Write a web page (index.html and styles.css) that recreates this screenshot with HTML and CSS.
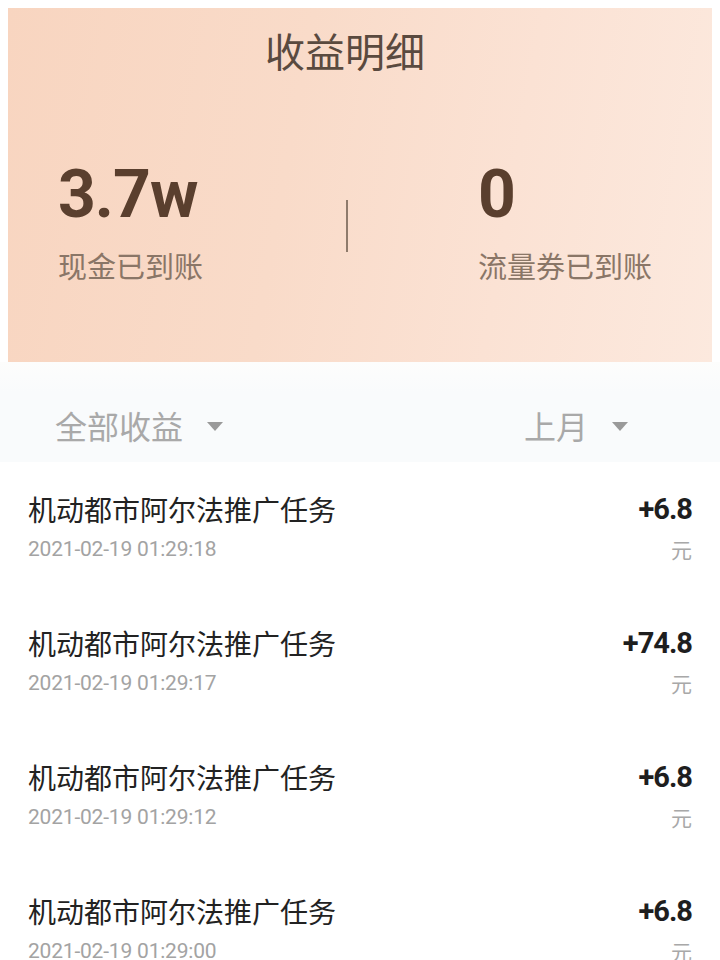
FILE: index.html
```html
<!DOCTYPE html>
<html lang="zh">
<head>
<meta charset="utf-8">
<title>收益明细</title>
<link rel="stylesheet" href="styles.css">
</head>
<body>
<div class="page">
  <section class="summary">
    <h1 class="summary-title">收益明细</h1>
    <div class="stats">
      <div class="stat stat-cash">
        <div class="stat-value">3.7w</div>
        <div class="stat-label">现金已到账</div>
      </div>
      <div class="stat-divider"></div>
      <div class="stat stat-coupon">
        <div class="stat-value">0</div>
        <div class="stat-label">流量券已到账</div>
      </div>
    </div>
  </section>

  <div class="filters">
    <div class="filter">全部收益<span class="caret"></span></div>
    <div class="filter">上月<span class="caret"></span></div>
  </div>

  <ul class="records">
    <li class="record">
      <div class="record-main">
        <div class="record-title">机动都市阿尔法推广任务</div>
        <div class="record-time">2021-02-19 01:29:18</div>
      </div>
      <div class="record-side">
        <div class="record-amount">+6.8</div>
        <div class="record-unit">元</div>
      </div>
    </li>
    <li class="record">
      <div class="record-main">
        <div class="record-title">机动都市阿尔法推广任务</div>
        <div class="record-time">2021-02-19 01:29:17</div>
      </div>
      <div class="record-side">
        <div class="record-amount">+74.8</div>
        <div class="record-unit">元</div>
      </div>
    </li>
    <li class="record">
      <div class="record-main">
        <div class="record-title">机动都市阿尔法推广任务</div>
        <div class="record-time">2021-02-19 01:29:12</div>
      </div>
      <div class="record-side">
        <div class="record-amount">+6.8</div>
        <div class="record-unit">元</div>
      </div>
    </li>
    <li class="record">
      <div class="record-main">
        <div class="record-title">机动都市阿尔法推广任务</div>
        <div class="record-time">2021-02-19 01:29:00</div>
      </div>
      <div class="record-side">
        <div class="record-amount">+6.8</div>
        <div class="record-unit">元</div>
      </div>
    </li>
  </ul>
</div>
</body>
</html>
```

FILE: styles.css
```css
html, body {
  margin: 0;
  padding: 0;
  background: #ffffff;
}
body {
  width: 720px;
  height: 960px;
  overflow: hidden;
  font-family: "Noto Sans CJK SC", "Noto Sans", sans-serif;
}
.page {
  width: 720px;
}

/* summary card */
.summary {
  margin: 8px 8px 0;
  height: 354px;
  box-sizing: border-box;
  padding-top: 18px;
  background: linear-gradient(100deg, #f8d5c0 0%, #f9dbc9 40%, #fbe2d4 70%, #fce9de 100%);
}
.summary-title {
  margin: 0;
  padding-right: 30px;
  text-align: center;
  font-size: 40px;
  line-height: 48px;
  font-weight: 400;
  color: #5a4a3f;
}
.stats {
  display: flex;
  margin-top: 88px;
}
.stat-cash {
  width: 338px;
  padding-left: 50px;
  box-sizing: border-box;
}
.stat-coupon {
  padding-left: 130px;
}
.stat-value {
  font-family: Roboto, "Liberation Sans", sans-serif;
  font-weight: 700;
  font-size: 66px;
  line-height: 66px;
  color: #5a3f2e;
  letter-spacing: -1px;
}
.stat-label {
  margin-top: 19px;
  font-size: 29px;
  line-height: 36px;
  color: #8a7667;
}
.stat-divider {
  width: 2px;
  height: 52px;
  margin-top: 38px;
  background: #8f7b6c;
}

/* filters */
.filters {
  height: 100px;
  box-sizing: border-box;
  padding: 26px 92px 0 55px;
  display: flex;
  align-items: center;
  justify-content: space-between;
  background: linear-gradient(180deg, #fdfdfc 0%, #f9fbfc 30%, #f9fbfc 100%);
}
.filter {
  display: flex;
  align-items: center;
  font-size: 32px;
  line-height: 40px;
  color: #a9a9a9;
}
.caret {
  width: 0;
  height: 0;
  margin-left: 24px;
  margin-top: 2px;
  border-left: 8.5px solid transparent;
  border-right: 8.5px solid transparent;
  border-top: 9px solid #9a9a9a;
}

/* records */
.records {
  list-style: none;
  margin: 0;
  padding: 0;
}
.record {
  height: 134px;
  box-sizing: border-box;
  padding: 27px 28px 0 28px;
  display: flex;
  justify-content: space-between;
}
.record-title {
  font-size: 28px;
  line-height: 40px;
  color: #222222;
}
.record-time {
  margin-top: 5px;
  font-family: Roboto, "Liberation Sans", sans-serif;
  font-size: 21px;
  line-height: 30px;
  color: #a3a3a3;
  letter-spacing: -0.2px;
}
.record-side {
  display: flex;
  flex-direction: column;
  align-items: flex-end;
}
.record-amount {
  font-family: Roboto, "Liberation Sans", sans-serif;
  font-weight: 700;
  font-size: 29px;
  line-height: 40px;
  color: #1e1e1e;
  letter-spacing: -1px;
}
.record-unit {
  margin-top: 5px;
  font-size: 21px;
  line-height: 30px;
  color: #a8a8a8;
}
```
